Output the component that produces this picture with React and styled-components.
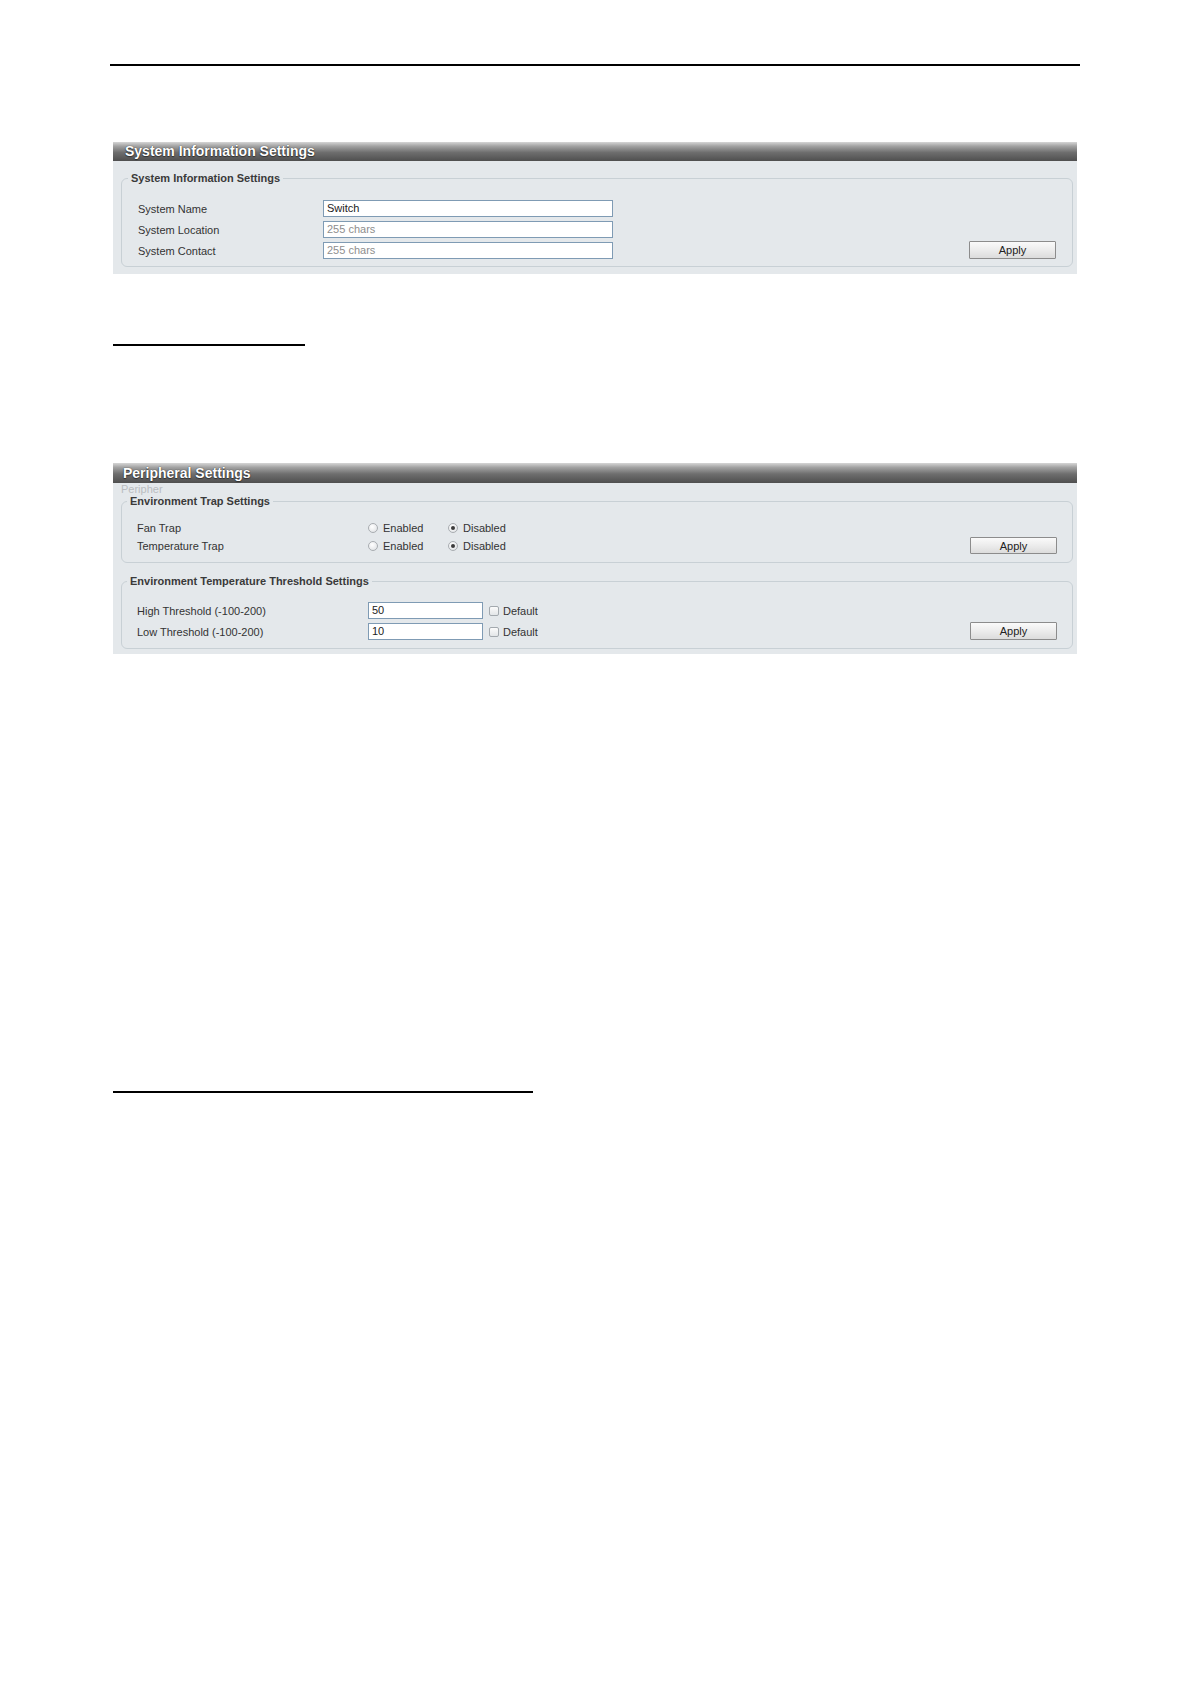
import React from "react";
import styled, { createGlobalStyle } from "styled-components";

const GlobalStyle = createGlobalStyle`
    html, body {
        margin: 0;
        padding: 0;
        background: #ffffff;
        min-height: 1684px;
    }
    body {
        font-family: "Liberation Sans", Arial, sans-serif;
        color: #333;
    }
`

const Page = styled.div`
    width: 1191px;
    min-height: 1684px;
    padding-top: 64px;
    box-sizing: border-box;
`

const Rule = styled.div`
    height: 2px;
    background: #000;
    width: ${(p) => p.$width}px;
    margin-left: ${(p) => p.$left}px;
    margin-top: ${(p) => p.$top}px;
`

const Panel = styled.section`
    width: 964px;
    margin-left: 113px;
    margin-top: ${(p) => p.$top}px;
`

const TitleBar = styled.div`
    height: ${(p) => p.$height || 19}px;
    line-height: ${(p) => p.$height || 19}px;
    padding-left: ${(p) => p.$pad}px;
    background: linear-gradient(to bottom, #d6d6d6 0%, #a2a2a2 22%, #6e6e6e 55%, #4f4f4f 100%);
    color: #fff;
    font-size: 14px;
    font-weight: bold;
    text-shadow: 0 0 1px #222, 0 1px 1px #333;
    white-space: nowrap;
`

const PanelBody = styled.div`
    background: #e4e8eb;
    padding: ${(p) => p.$pad};
`

const Ghost = styled.div`
    font-size: 11px;
    line-height: 12px;
    height: 12px;
    color: #b9bcbf;
`

const Group = styled.fieldset`
    margin: ${(p) => p.$top || 0}px 0 0 0;
    padding: ${(p) => p.$pad};
    border: 1px solid #c8d0d5;
    border-radius: 6px;
    min-width: 0;
`

const Legend = styled.legend`
    margin-left: -10px;
    padding: 0 3px;
    font-size: 11px;
    line-height: 14px;
    font-weight: bold;
    color: #3a3a3a;
`

const GroupInner = styled.div`
    display: flex;
    justify-content: space-between;
    align-items: flex-end;
`

const Rows = styled.div`
    display: flex;
    flex-direction: column;
    gap: ${(p) => p.$gap}px;
`

const Row = styled.div`
    display: flex;
    align-items: center;
    height: 17px;
`

const Label = styled.span`
    width: ${(p) => p.$width}px;
    font-size: 11px;
    color: #333;
    white-space: nowrap;
`

const TextBox = styled.div`
    box-sizing: border-box;
    width: ${(p) => p.$width}px;
    height: 17px;
    line-height: 15px;
    padding-left: 3px;
    background: #fff;
    border: 1px solid #7f9bb4;
    font-size: 11px;
    color: ${(p) => (p.$placeholder ? "#8e8e8e" : "#222")};
`

const Option = styled.span`
    display: inline-flex;
    align-items: center;
    width: 80px;
    font-size: 11px;
    color: #333;
`

const Radio = styled.span`
    box-sizing: border-box;
    width: 10px;
    height: 10px;
    margin-right: 5px;
    border-radius: 50%;
    border: 1px solid #a9adb1;
    background: radial-gradient(circle at 40% 35%, #ffffff 0%, #e6e8ea 70%, #d6d9dc 100%);
    display: inline-flex;
    align-items: center;
    justify-content: center;

    &::after {
        content: "";
        width: 4px;
        height: 4px;
        border-radius: 50%;
        background: ${(p) => (p.$checked ? "#3b3b3b" : "transparent")};
    }
`

const Check = styled.span`
    box-sizing: border-box;
    width: 10px;
    height: 10px;
    margin: 0 4px 0 6px;
    border: 1px solid #a3a9ae;
    border-radius: 2px;
    background: linear-gradient(to bottom, #fbfbfb, #e3e6e8);
`

const CheckText = styled.span`
    font-size: 11px;
    color: #333;
`

const ApplyButton = styled.button`
    box-sizing: border-box;
    width: 87px;
    height: ${(p) => p.$height}px;
    padding: 0;
    border: 1px solid #8c8c8c;
    border-radius: 1px;
    background: linear-gradient(to bottom, #fafafa 0%, #ececec 50%, #dcdcdc 100%);
    font-family: "Liberation Sans", Arial, sans-serif;
    font-size: 11px;
    color: #222;
    cursor: pointer;
`

function SystemInfoPanel() {
    const rows = [
        { label: "System Name", value: "Switch" },
        { label: "System Location", value: "255 chars", placeholder: true },
        { label: "System Contact", value: "255 chars", placeholder: true },
    ];

    return (
        <Panel $top={76}>
            <TitleBar $pad={12}>System Information Settings</TitleBar>
            <PanelBody $pad="10px 4px 7px 8px">
                <Group $pad="15px 16px 7px 16px">
                    <Legend>System Information Settings</Legend>
                    <GroupInner>
                        <Rows $gap={4}>
                            {rows.map((r) => (
                                <Row key={r.label}>
                                    <Label $width={185}>{r.label}</Label>
                                    <TextBox $width={290} $placeholder={r.placeholder}>
                                        {r.value}
                                    </TextBox>
                                </Row>
                            ))}
                        </Rows>
                        <ApplyButton $height={18}>Apply</ApplyButton>
                    </GroupInner>
                </Group>
            </PanelBody>
        </Panel>
    );
}

function PeripheralPanel() {
    const traps = ["Fan Trap", "Temperature Trap"];
    const thresholds = [
        { label: "High Threshold (-100-200)", value: "50" },
        { label: "Low Threshold (-100-200)", value: "10" },
    ];

    return (
        <Panel $top={117}>
            <TitleBar $pad={10} $height={20}>Peripheral Settings</TitleBar>
            <PanelBody $pad="0 4px 5px 8px">
                <Ghost>Peripher</Ghost>
                <Group $top={-1} $pad="11px 15px 8px 15px">
                    <Legend>Environment Trap Settings</Legend>
                    <GroupInner>
                        <Rows $gap={1}>
                            {traps.map((t) => (
                                <Row key={t}>
                                    <Label $width={231}>{t}</Label>
                                    <Option>
                                        <Radio />
                                        Enabled
                                    </Option>
                                    <Option>
                                        <Radio $checked />
                                        Disabled
                                    </Option>
                                </Row>
                            ))}
                        </Rows>
                        <ApplyButton $height={17}>Apply</ApplyButton>
                    </GroupInner>
                </Group>
                <Group $top={11} $pad="14px 15px 8px 15px">
                    <Legend>Environment Temperature Threshold Settings</Legend>
                    <GroupInner>
                        <Rows $gap={4}>
                            {thresholds.map((t) => (
                                <Row key={t.label}>
                                    <Label $width={231}>{t.label}</Label>
                                    <TextBox $width={115}>{t.value}</TextBox>
                                    <Check />
                                    <CheckText>Default</CheckText>
                                </Row>
                            ))}
                        </Rows>
                        <ApplyButton $height={18}>Apply</ApplyButton>
                    </GroupInner>
                </Group>
            </PanelBody>
        </Panel>
    );
}

export default function App() {
    return (
        <>
            <GlobalStyle />
            <Page>
                <Rule $width={970} $left={110} $top={0} />
                <SystemInfoPanel />
                <Rule $width={192} $left={113} $top={70} />
                <PeripheralPanel />
                <Rule $width={420} $left={113} $top={437} />
            </Page>
        </>
    );
}
